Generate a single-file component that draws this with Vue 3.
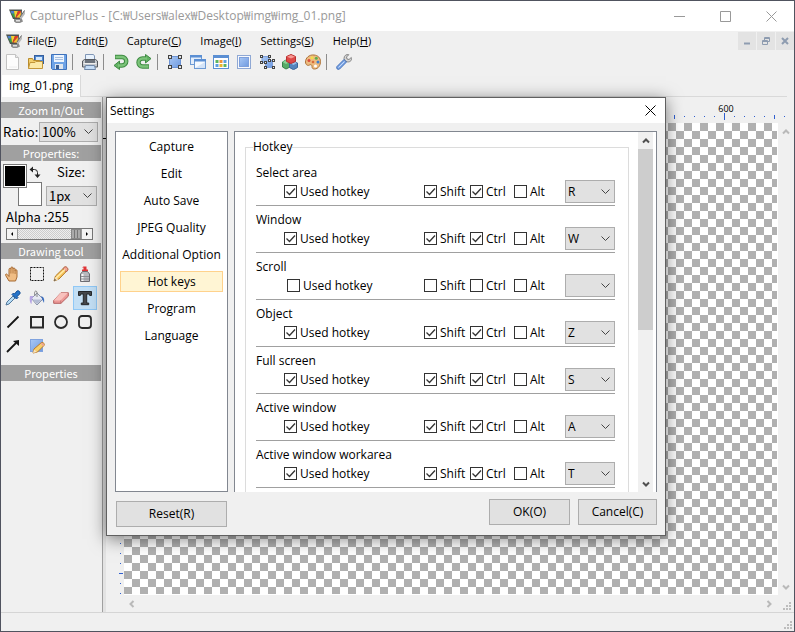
<script setup>
import { reactive, ref } from 'vue'

const menus = [
  ['File', 'F'], ['Edit', 'E'], ['Capture', 'C'], ['Image', 'I'], ['Settings', 'S'], ['Help', 'H'],
]

const toolGroups = [
  ['new', 'open', 'save'],
  ['print'],
  ['undo', 'redo'],
  ['area', 'windows', 'grid', 'full', 'nodes', 'cubes', 'palette'],
  ['wrench'],
]

const drawTools = [
  'hand', 'marquee', 'pencil', 'spray',
  'dropper', 'bucket', 'eraser', 'text',
  'line', 'rect', 'ellipse', 'round',
  'arrow', 'note',
]
const activeTool = ref('text')

const pages = ['Capture', 'Edit', 'Auto Save', 'JPEG Quality', 'Additional Option', 'Hot keys', 'Program', 'Language']
const activePage = ref('Hot keys')

const hotkeys = reactive([
  { name: 'Select area', used: true, shift: true, ctrl: true, alt: false, key: 'R' },
  { name: 'Window', used: true, shift: true, ctrl: true, alt: false, key: 'W' },
  { name: 'Scroll', used: false, shift: false, ctrl: false, alt: false, key: '' },
  { name: 'Object', used: true, shift: true, ctrl: true, alt: false, key: 'Z' },
  { name: 'Full screen', used: true, shift: true, ctrl: true, alt: false, key: 'S' },
  { name: 'Active window', used: true, shift: true, ctrl: true, alt: false, key: 'A' },
  { name: 'Active window workarea', used: true, shift: true, ctrl: true, alt: false, key: 'T' },
])
const keys = ['', 'A', 'R', 'S', 'T', 'W', 'Z']

// Ruler marks every 10 units, only as far as the editor reaches.
const marks = (size) => Array.from({ length: Math.floor(size / 10) + 1 }, (_, i) => i * 10)
const ticksX = marks(window.innerWidth - 132)
const ticksY = marks(window.innerHeight - 162)
const tickLength = (t) => (t % 100 === 0 ? 7 : t % 50 === 0 ? 4 : 1)

const node = (x, y) => `<rect x="${x}" y="${y}" width="4" height="4" fill="#444"/><rect x="${x + 1}" y="${y + 1}" width="2" height="2" fill="#e4e4e4"/>`
const dot = (x, y) => `<rect x="${x}" y="${y}" width="3" height="3" fill="#444"/><rect x="${x + 1}" y="${y + 1}" width="1" height="1" fill="#eee"/>`

const icons = {
  logo: '<path d="M0 1.500h13l-.5 9.500H4z" fill="#4c524e"/><path d="M1.500 3h3.500l1 6.500H4.500z" fill="#35a04a"/><path d="M1.500 3H5l.5 2.500H2.500z" fill="#4f7fd0"/><path d="M5 3h4L6.500 9.500H6z" fill="#f2d231"/><path d="M9 3h3l-.5 6.500h-5z" fill="#dd3a2a"/><path d="M8.500 8 12 4l-.5 5.500h-4z" fill="#f2c531"/><path d="M15.800 2 10.500 9.500l1.500 2L16 6z" fill="#b9b9b9"/><path d="M15.500 2.500 11 9" stroke="#6a6a6a" fill="none"/><path d="M5 11h8l1 2.500L11 15H7l-2-1.500z" fill="#8b8b8b"/><path d="M7 12h4v1.500H7z" fill="#e0e0e0"/>',
  new: '<path d="M1.500.5h9l3 3v12h-12z" fill="#fdfdfd" stroke="#c3c3c3"/><path d="M10.500.5v3h3" fill="#e8e8e8" stroke="#c3c3c3"/><path d="M4 13h8" stroke="#eee"/>',
  open: '<rect x="6.500" y="1.500" width="9" height="8" fill="#4e86cf" stroke="#355f9d"/><rect x="8" y="3" width="6" height="3" fill="#d5e8fb"/><path d="M.5 14.500v-10h4l1 2h6v2" fill="#f3cf6c" stroke="#b98c2d"/><path d="M.5 14.500l1.500-6h5l1-1h6.500v7z" fill="#fce9a6" stroke="#c3973a"/>',
  save: '<path d="M.5.5h15v15h-14l-1-1z" fill="#6ea3e6" stroke="#3f72bb"/><rect x="3" y="1" width="10" height="7" fill="#eef5fd"/><path d="M4 3.500h8M4 5.500h8" stroke="#a7bfe0"/><rect x="4" y="10" width="8" height="5" fill="#dfe6ee"/><rect x="5" y="11" width="3" height="4" fill="#3c5f93"/>',
  print: '<path d="M3.500.5h8l1 1.500v6h-9z" fill="#e8f2fd" stroke="#7f95b5"/><path d="M.5 7l2-1.500h11l2 1.500v6H.5z" fill="#c4c8cd" stroke="#55595f"/><path d="M3 6h10v3H3z" fill="#6d747d"/><path d="M1.500 9.500h13" stroke="#eee"/><path d="M3.500 11.500h9l1 4h-11z" fill="#c5ddf7" stroke="#6e87a8"/>',
  undo: '<path d="M2 3h7a4 4 0 0 1 0 8.500H6" fill="none" stroke="#3f8b43" stroke-width="4.400"/><path d="M6.500 7v8.500L1 11.500z" fill="#62b264" stroke="#3f8b43"/><path d="M2.500 3H9a4 4 0 0 1 0 8.500H5" fill="none" stroke="#7cc47a" stroke-width="2.400"/>',
  redo: '<path d="M10 4.500H6.500a3.800 3.800 0 0 0 0 8H13" fill="none" stroke="#3f8b43" stroke-width="4.400"/><path d="M9.500.5V9L15 4.600z" fill="#62b264" stroke="#3f8b43"/><path d="M11 4.500H6.500a3.800 3.800 0 0 0 0 8h6" fill="none" stroke="#7cc47a" stroke-width="2.400"/>',
  area: '<rect x="2.500" y="2.500" width="11" height="11" fill="url(#blue)" stroke="#6d94d6"/>' + node(1, 1) + node(11, 1) + node(1, 11) + node(11, 11),
  windows: '<rect x=".5" y="1.500" width="11" height="9" fill="#e4eefb" stroke="#6d9ad4"/><path d="M0 1h12v2.500H0z" fill="#5b8fd3"/><rect x="4.500" y="5.500" width="11" height="9" fill="#f6faff" stroke="#6d9ad4"/><path d="M4 5h12v2.500H4z" fill="#5b8fd3"/><path d="M5 14l10-6v6z" fill="#d4e4f8"/>',
  grid: '<rect x=".5" y="1.500" width="15" height="13" fill="#fff" stroke="#5b8fd3"/><path d="M0 1h16v3H0z" fill="#5b8fd3"/><path d="M2.500 6h3v3h-3zM10.500 10h3v3h-3z" fill="#5fb45f"/><path d="M6.500 6h3v3h-3z" fill="#f09038"/><path d="M10.500 6h3v3h-3zM2.500 10h3v3h-3z" fill="#5f9fe0"/><path d="M6.500 10h3v3h-3z" fill="#e9b62c"/>',
  full: '<rect x="1.500" y="1.500" width="13" height="13" fill="#f7f9fd" stroke="#8fa8d4"/><rect x="3.500" y="3.500" width="9" height="9" fill="url(#blue)" stroke="#7fa0db"/>',
  nodes: '<path d="M3 2.500h7.500v4h3v7h-7v-5H3z" fill="url(#blue)" stroke="#7d9fdc"/>' + dot(1, 1) + dot(9, 1) + dot(1, 7) + dot(5, 7) + dot(9, 5) + dot(13, 5) + dot(5, 12) + dot(13, 12),
  cubes: '<path d="M.5 8l3.500-2 4 2v5l-4 2-3.500-2z" fill="#57ab67" stroke="#39804a"/><path d="M.5 8 4 10l4-2-4-2z" fill="#8bd096"/><path d="M7.500 9l4-2 4 2v4.500l-4 2.200-4-2.200z" fill="#5584bd" stroke="#3a6599"/><path d="M8 9l3.500 2L15 9l-3.500-2z" fill="#9abfe8"/><path d="M4.500 2.500l4.500-2 4.500 2v5L9 9.500l-4.500-2z" fill="#dd4848" stroke="#b83030"/><path d="M5 2.700 9 4.600l4-1.900L9 1z" fill="#f79a94"/>',
  palette: '<path d="M9 1C4 .5.5 4 .5 8c0 3 2.500 4 4 3 1.500-.8 2.500 0 2.500 1.500C7 14.500 8 15 9.500 15c4 0 6-4 6-7.500S13 1.300 9 1z" fill="#edbb80" stroke="#ad7338"/><circle cx="4" cy="6.500" r="1.500" fill="#d94b3c"/><circle cx="7" cy="3.700" r="1.500" fill="#f4dd49"/><circle cx="11.300" cy="4.200" r="1.500" fill="#5cae4e"/><circle cx="13" cy="8" r="1.500" fill="#3c7fd0"/><circle cx="10.500" cy="12" r="1.500" fill="#fff"/><circle cx="8" cy="8" r="1.300" fill="#d86c3a"/>',
  wrench: '<path d="M15.300 3.500 13 5.500l-2-.5-.5-2L12.800.7C10.500 0 8 1.500 8 4.500L9 7l2.500.9c3 .3 4.700-2 3.800-4.400z" fill="#d4d4d4" stroke="#858585"/><path d="M8 5.500 1 12.500c-1 2 .5 3.500 2.500 2.600L10.500 8z" fill="#7ba5e6" stroke="#4470b8"/><path d="M8.500 7.500l-6 6" stroke="#c4daf8"/>',
  hand: '<path d="M4 15 .7 9.500C0 8 1.500 7.500 2.300 8.500L4 10.500V3.300c0-1.300 1.800-1.300 1.900 0V2c0-1.400 2-1.400 2.100 0v1c.1-1.200 2-1.200 2.100 0v1.500c.2-1.200 1.900-1 1.900.3V11l-1.500 4z" fill="#f0bd84" stroke="#a66a33"/><path d="M5.900 3.500v4M8 3v4.500M10.100 4v4" stroke="#a66a33" fill="none" stroke-width=".8"/>',
  marquee: '<rect x="1.500" y="1.500" width="13" height="13" fill="none" stroke="#111" stroke-dasharray="2 1"/>',
  pencil: '<path d="M1 15l1.500-5L11.500 1.200c1.500-1 4 1.300 3 3L6 13z" fill="#f7c55a" stroke="#b27928"/><path d="M10 2.600l1.700-1.500c1.500-1 3.800 1.300 3 3L13.300 6z" fill="#f2a596" stroke="#b66652"/><path d="M3 12l9-8.500" stroke="#ffebae" stroke-width="1.500"/><path d="M1 15l1.300-4L5.500 13.600z" fill="#f5dfb9"/><path d="M1 15l.7-2 1.500 1z" fill="#333"/>',
  spray: '<path d="M5 1.500 6.500.5h3v3H11v2H5v-2h1.500v-2z" fill="#e13538"/><path d="M3.500 8 5.500 5.500h5L12.500 8v7.500h-9z" fill="#b9b9be" stroke="#6d6d72"/><path d="M5.500 8v7" stroke="#f7f7f7" stroke-width="2"/><path d="M4 10.500h8M4 13h8" stroke="#8f8f94"/>',
  dropper: '<path d="M1 15l1-3 6-6 2 2-6 6z" fill="#b7dcf5" stroke="#54799c"/><path d="M7 4.500 8.500 3l1 1 2.500-3c1.500-1 4 1 2.800 3L12 6.500l1 1L11.500 9z" fill="#2574c9" stroke="#164f93"/>',
  bucket: '<path d="M2.500 8.500 8 3l6 6-6 6z" fill="#e6e9f2" stroke="#8a93a8"/><path d="M4 9.500h9L8 14z" fill="#b3bbd3"/><path d="M6 6C4.500 1 7 0 8 2v5" fill="none" stroke="#888"/><path d="M1 6h3.500L3 9.500 2.500 14C.5 13 .5 8 1 6z" fill="#b7a6e4"/><path d="M12 6c3 1 3.500 3 3 7l-1.500-3z" fill="#3d6fbf"/>',
  eraser: '<path d="M.7 10.500 8 2.700h7.300v3.500L8 13.300H.7z" fill="#ed9a98" stroke="#b4605f"/><path d="M.7 10.500H7.500l7.500-7.700-7.300-.1z" fill="#f8c1bd"/><path d="M7.700 10.500v3" stroke="#c87775"/>',
  text: '<path d="M1.500 1.500h13v4h-1.800l-.5-1.500H9.700v9h2v1.700H4.300V13h2V4H3.800l-.5 1.500H1.500z" fill="#45484c" stroke="#25282b"/>',
  line: '<path d="M2.500 13.500l11-11" stroke="#161616" stroke-width="1.800"/>',
  rect: '<rect x="2" y="3" width="12" height="10.500" fill="none" stroke="#2a2a2a" stroke-width="2"/>',
  ellipse: '<circle cx="8" cy="8" r="6" fill="none" stroke="#2a2a2a" stroke-width="1.800"/>',
  round: '<rect x="2" y="2" width="12" height="12" rx="3" fill="none" stroke="#2a2a2a" stroke-width="1.800"/>',
  arrow: '<path d="M2 14 11 5" stroke="#161616" stroke-width="1.800"/><path d="M14 2v6L8 3z" fill="#161616"/>',
  note: '<rect x="1.500" y="1.500" width="12" height="12" fill="url(#blue)" stroke="#80a3df"/><path d="M4 15l1-4 7.500-6.500c2-.5 3.500 1.500 2.500 3L8.500 14z" fill="#f8cf6b" stroke="#b97a2b"/><path d="M4 15l1-3.500L8 14z" fill="#f7e6c4"/><path d="M11.500 5.300c2-1 4 .8 3.500 2.200L14 8.300z" fill="#efa393"/>',
  swap: '<path d="M1.500 3.500h4q3 0 3 3v4" fill="none" stroke="#222"/><path d="M4 .5v6L.5 3.500zM5.500 8.500h6l-3 3.500z" fill="#222"/>',
}
</script>

<template>
  <div class="window">
    <svg class="defs" aria-hidden="true">
      <defs>
        <linearGradient id="blue" x1="0" y1="0" x2="1" y2="1">
          <stop offset="0" stop-color="#a9c8f5" /><stop offset="1" stop-color="#6f9ae0" />
        </linearGradient>
      </defs>
    </svg>

    <header class="titlebar">
      <svg class="icon" viewBox="0 0 16 16" v-html="icons.logo"></svg>
      <span class="caption">CapturePlus - [C:₩Users₩alex₩Desktop₩img₩img_01.png]</span>
      <button class="sys" aria-label="Minimize"><svg viewBox="0 0 11 11"><path d="M0 5.500h11" /></svg></button>
      <button class="sys" aria-label="Maximize"><svg viewBox="0 0 11 11"><path d="M.5.500h10v10H.5z" /></svg></button>
      <button class="sys" aria-label="Close"><svg viewBox="0 0 11 11"><path d="M.5.500l10 10M10.500.500l-10 10" /></svg></button>
    </header>

    <nav class="menubar">
      <svg class="icon" viewBox="0 0 16 16" v-html="icons.logo"></svg>
      <button v-for="[label, key] in menus" :key="label" class="menu">{{ label }}(<u>{{ key }}</u>)</button>
      <div class="mdi">
        <button aria-label="Minimize document"><svg viewBox="0 0 8 8"><path d="M1 6.500h6" stroke-width="2" /></svg></button>
        <button aria-label="Restore document"><svg viewBox="0 0 8 8"><path d="M2.500 3V.5h5v4H5.500M2.500 1.500h5M.5 3.500h5v4h-5zM.5 4.500h5" /></svg></button>
        <button aria-label="Close document"><svg viewBox="0 0 8 8"><path d="M1 1l6 6M7 1L1 7" stroke-width="2" /></svg></button>
      </div>
    </nav>

    <div class="toolbar">
      <div v-for="(group, g) in toolGroups" :key="g" class="group">
        <button v-for="name in group" :key="name" :aria-label="name">
          <svg class="icon" viewBox="0 0 16 16" v-html="icons[name]"></svg>
        </button>
      </div>
    </div>

    <div class="tabs"><button class="tab">img_01.png</button></div>

    <main class="work">
      <aside class="side">
        <h2>Zoom In/Out</h2>
        <div class="ratio">
          <label for="ratio">Ratio:</label>
          <select id="ratio"><option>100%</option></select>
        </div>
        <h2>Properties:</h2>
        <div class="props">
          <div class="swatches">
            <button class="swatch back" aria-label="Background"></button>
            <button class="swatch fore" aria-label="Foreground"></button>
            <svg class="swap" viewBox="0 0 12 12" v-html="icons.swap"></svg>
          </div>
          <div class="size">
            <label for="size">Size:</label>
            <select id="size"><option>1px</option></select>
          </div>
        </div>
        <label class="alpha" for="alpha">Alpha :255</label>
        <div class="slider">
          <svg viewBox="0 0 10 10"><path d="M6 3v4L4 5z" /></svg>
          <input id="alpha" type="range" min="0" max="255" value="255">
          <svg viewBox="0 0 10 10"><path d="M4 3v4l2-2z" /></svg>
        </div>
        <h2>Drawing tool</h2>
        <div class="tools">
          <button
            v-for="name in drawTools" :key="name" :aria-label="name"
            :class="{ active: name === activeTool }" @click="activeTool = name"
          >
            <svg class="icon" viewBox="0 0 16 16" v-html="icons[name]"></svg>
          </button>
        </div>
        <h2>Properties</h2>
      </aside>

      <section class="editor">
        <svg class="ruler-x">
          <g v-for="t in ticksX" :key="t">
            <rect :x="t + 21" :y="20 - Math.ceil(tickLength(t) / 2)" width="1" :height="tickLength(t)" fill="#2f5fd0" />
            <text v-if="t && t % 100 === 0" :x="t + 23" y="15" text-anchor="middle">{{ t }}</text>
          </g>
        </svg>
        <svg class="ruler-y">
          <rect x="0" y="15" width="4" height="1" />
          <rect
            v-for="t in ticksY" :key="t" :x="18 - Math.ceil(tickLength(t) / 2)" :y="t"
            :width="tickLength(t)" height="1" fill="#2f5fd0"
          />
        </svg>
        <div class="canvas"></div>
        <div class="scroll-y">
          <svg class="chev" viewBox="0 0 8 8"><path d="M1 5.500l3-3 3 3" /></svg>
          <svg class="chev" viewBox="0 0 8 8"><path d="M1 2.500l3 3 3-3" /></svg>
        </div>
        <div class="scroll-x">
          <svg class="chev" viewBox="0 0 8 8"><path d="M5.500 1l-3 3 3 3" /></svg>
          <svg class="chev" viewBox="0 0 8 8"><path d="M2.500 1l3 3-3 3" /></svg>
        </div>
        <svg class="grip" viewBox="0 0 8 8"><path d="M6 0h2v2H6zM3 3h2v2H3zM6 3h2v2H6zM0 6h2v2H0zM3 6h2v2H3zM6 6h2v2H6z" /></svg>
      </section>
    </main>

    <footer class="status">
      <svg class="grip" viewBox="0 0 8 8"><path d="M6 0h2v2H6zM3 3h2v2H3zM6 3h2v2H6zM0 6h2v2H0zM3 6h2v2H3zM6 6h2v2H6z" /></svg>
    </footer>

    <div class="dialog" role="dialog" aria-labelledby="dlg-title">
      <div class="dlg-bar">
        <span id="dlg-title">Settings</span>
        <button aria-label="Close"><svg viewBox="0 0 11 11"><path d="M.5.500l10 10M10.500.500l-10 10" /></svg></button>
      </div>
      <div class="dlg-body">
        <div class="pages">
          <button
            v-for="p in pages" :key="p" :class="{ active: p === activePage }" @click="activePage = p"
          >{{ p }}</button>
        </div>
        <div class="pane">
          <fieldset>
            <legend>Hotkey</legend>
            <div v-for="(h, i) in hotkeys" :key="h.name" class="hotkey">
              <div class="name">{{ h.name }}</div>
              <label class="used" :class="{ off: !h.used }"><input v-model="h.used" type="checkbox">Used hotkey</label>
              <label><input v-model="h.shift" type="checkbox">Shift</label>
              <label><input v-model="h.ctrl" type="checkbox">Ctrl</label>
              <label><input v-model="h.alt" type="checkbox">Alt</label>
              <select :id="'key' + i" v-model="h.key" :aria-label="h.name">
                <option v-for="k in keys" :key="k" :value="k">{{ k }}</option>
              </select>
            </div>
          </fieldset>
          <div class="bar">
            <svg viewBox="0 0 8 8"><path d="M1 5.500l3-3 3 3" /></svg>
            <div class="thumb"></div>
            <svg viewBox="0 0 8 8"><path d="M1 2.500l3 3 3-3" /></svg>
          </div>
        </div>
      </div>
      <div class="dlg-foot">
        <button class="reset">Reset(R)</button>
        <button class="ok">OK(O)</button>
        <button class="cancel">Cancel(C)</button>
      </div>
    </div>
  </div>
</template>

<style>
body {
  margin: 0;
}
</style>

<style scoped>
* {
  box-sizing: border-box;
}
.window {
  position: relative;
  display: flex;
  flex-direction: column;
  min-height: 100vh;
  border: 1px solid #50535f;
  background: #f0f0f0;
  color: #000;
  font: 12px/16px "Open Sans", "Noto Sans CJK KR", sans-serif;
}
.defs {
  position: absolute;
  width: 0;
  height: 0;
}
button {
  margin: 0;
  padding: 0;
  border: 0;
  background: none;
  color: inherit;
  font: inherit;
}
.icon {
  display: block;
  flex: none;
  width: 16px;
  height: 16px;
}
.titlebar {
  display: flex;
  align-items: center;
  height: 30px;
  padding-left: 8px;
  background: #fff;
  color: #999;
}
.caption {
  flex: 1;
  margin-left: 5px;
  white-space: nowrap;
}
.sys {
  display: grid;
  place-items: center;
  width: 46px;
  height: 30px;
}
.sys svg {
  width: 11px;
  height: 11px;
  fill: none;
  stroke: #999;
}
.menubar {
  display: flex;
  align-items: center;
  gap: 19px;
  height: 20px;
  padding-left: 5px;
  font-size: 11px;
}
.menubar .icon {
  margin-right: -14px;
}
.mdi {
  display: flex;
  gap: 1px;
  margin-left: auto;
}
.mdi button {
  display: grid;
  place-items: center;
  width: 18px;
  height: 18px;
  background: #e3e3e3;
}
.mdi svg {
  width: 8px;
  height: 8px;
  fill: none;
  stroke: #8e9cb0;
}
.toolbar {
  display: flex;
  height: 24px;
  padding-bottom: 2px;
}
.group {
  display: flex;
  align-items: center;
}
.group + .group::before {
  content: "";
  width: 1px;
  height: 16px;
  margin: 0 5px 0 2px;
  background: #8c8c8c;
}
.group button {
  display: grid;
  place-items: center;
  width: 23px;
  height: 22px;
}
.tabs {
  display: flex;
  height: 22px;
}
.tabs::after {
  content: "";
  flex: 1;
  margin-right: 7px;
  border-bottom: 1px solid #d9d9d9;
}
.tab {
  margin-left: 1px;
  padding: 0 7px;
  background: #fff;
  border-right: 1px solid #d9d9d9;
}
.work {
  display: flex;
  flex: 1;
  border-bottom: 1px solid #d5d5d5;
}
.side {
  flex: none;
  width: 102px;
  padding: 5px 1px 0 0;
  border-right: 1px solid #a0a0a0;
}
.side h2 {
  margin: 0;
  background: #a0a0a0;
  color: #fff;
  font: 400 11px/16px "Noto Sans CJK KR", sans-serif;
  text-align: center;
}
.side label {
  font: 13px/16px "Noto Sans CJK KR", sans-serif;
}
select {
  height: 23px;
  padding: 0 2px;
  border: 1px solid #adadad;
  border-radius: 0;
  appearance: none;
  background: #e1e1e1 url("data:image/svg+xml,%3Csvg xmlns='http://www.w3.org/2000/svg' width='9' height='6'%3E%3Cpath d='M.5.5l4 4 4-4' fill='none' stroke='%23444'/%3E%3C/svg%3E") no-repeat right 4px center;
  color: #000;
  font: inherit;
}
.side select {
  height: 20px;
  font: 13px/16px "Noto Sans CJK KR", sans-serif;
}
.ratio {
  display: flex;
  align-items: center;
  justify-content: space-between;
  height: 27px;
  padding: 0 3px 0 2px;
}
.ratio select {
  width: 59px;
}
.props {
  display: flex;
  justify-content: space-between;
  padding: 3px 4px 0 2px;
}
.swatches {
  position: relative;
  width: 39px;
  height: 42px;
}
.swatch {
  position: absolute;
  width: 24px;
  height: 24px;
  border: 1px solid #777;
}
.fore {
  top: 0;
  left: 0;
  background: #000;
  box-shadow: inset 0 0 0 1px #fff;
}
.back {
  right: 0;
  bottom: 0;
  background: #fff;
}
.swap {
  position: absolute;
  top: 2px;
  right: 1px;
  width: 12px;
  height: 12px;
}
.size {
  display: flex;
  flex-direction: column;
  justify-content: space-between;
  width: 51px;
}
.size label {
  padding-left: 11px;
}
.alpha {
  display: block;
  margin: 3px 5px;
}
.slider {
  display: flex;
  align-items: center;
  height: 12px;
  margin: 0 8px 3px 5px;
  border: 1px solid #777;
  background: #f4f4f4;
}
.slider svg {
  flex: none;
  width: 10px;
  height: 10px;
}
.slider input {
  flex: 1;
  min-width: 0;
  height: 10px;
  margin: 0;
  border: solid #999;
  border-width: 0 1px;
  appearance: none;
  background: repeating-conic-gradient(#ccc 0 25%, #eee 0 50%) 0 0 / 2px 2px;
}
.slider input::-webkit-slider-thumb {
  width: 10px;
  height: 10px;
  border: 1px solid #888;
  appearance: none;
  background: repeating-linear-gradient(90deg, #aaa 0 2px, #777 2px 3px);
}
.tools {
  display: grid;
  grid-template-columns: repeat(4, 24px);
  grid-auto-rows: 24px;
  padding: 3px 0 7px;
}
.tools button {
  display: grid;
  place-items: center;
}
.tools .active {
  background: #c3dff5;
  box-shadow: inset 0 0 0 1px #90c8f6;
}
.editor {
  display: grid;
  flex: 1;
  grid-template: 26px 1fr 17px / 21px 1fr 16px;
  min-width: 0;
  background: linear-gradient(90deg, #e3e3e3 3px, #f0f0f0 3px);
}
.ruler-x {
  grid-area: 1 / 1 / 2 / 4;
  width: 100%;
  height: 26px;
  font: 9px "Open Sans", sans-serif;
}
.ruler-y {
  grid-area: 2 / 1;
  width: 21px;
  height: 0;
  min-height: 100%;
}
.canvas {
  grid-area: 2 / 2;
  border-right: 1px solid #fff;
  border-bottom: 1px solid #fff;
  background: repeating-conic-gradient(#fff 0 25%, #b0b0b0 0 50%) 0 0 / 16px 16px;
}
.scroll-y,
.scroll-x {
  display: flex;
  justify-content: space-between;
}
.scroll-y {
  grid-area: 2 / 3;
  flex-direction: column;
  padding: 5px 4px 4px;
}
.scroll-x {
  grid-area: 3 / 2;
  padding: 5px 5px 4px 4px;
}
.chev {
  width: 8px;
  height: 8px;
  fill: none;
  stroke: #b9b9b9;
  stroke-width: 2;
}
.grip {
  width: 8px;
  height: 8px;
  fill: #bdbdbd;
}
.editor .grip {
  grid-area: 3 / 3;
  place-self: end;
  margin: 0 3px 2px 0;
}
.status {
  display: flex;
  align-items: flex-end;
  justify-content: flex-end;
  height: 18px;
  padding: 2px;
}
.dialog {
  position: absolute;
  top: 96px;
  right: 128px;
  left: 105px;
  min-width: 560px;
  border: 1px solid #606060;
  background: #f0f0f0;
  box-shadow: 0 3px 16px rgba(0, 0, 0, 0.5);
}
.dlg-bar {
  display: flex;
  align-items: center;
  justify-content: space-between;
  height: 25px;
  padding: 0 9px 0 3px;
  background: #fff;
}
.dlg-bar button {
  display: grid;
  place-items: center;
}
.dlg-bar svg {
  width: 11px;
  height: 11px;
  fill: none;
  stroke: #000;
}
.dlg-body {
  display: flex;
  gap: 6px;
  padding: 8px 8px 0;
}
.pages {
  width: 113px;
  padding: 4px;
  border: 1px solid #828790;
  background: #fff;
}
.pages button {
  display: block;
  width: 100%;
  height: 21px;
  margin-bottom: 6px;
  border: 1px solid transparent;
  white-space: nowrap;
}
.pages .active {
  border-color: #ffd28c;
  background: #fff5d4;
}
.pane {
  display: flex;
  flex: 1;
  padding: 0 3px 0 10px;
  border: 1px solid #828790;
  border-bottom: 0;
  background: #fff;
}
fieldset {
  flex: 1;
  margin: 7px 9px 0 0;
  padding: 4px 13px 4px 10px;
  border: 1px solid #dcdcdc;
  border-bottom: 0;
}
legend {
  margin-left: -3px;
  padding: 0;
}
.hotkey {
  display: grid;
  grid-template-columns: 1fr 46px 44px 51px 50px;
  align-items: center;
  padding: 6px 0 2px;
  border-bottom: 1px solid #a0a0a0;
}
.hotkey .name {
  grid-column: 1 / -1;
  height: 15px;
}
.hotkey label {
  display: flex;
  align-items: center;
  gap: 3px;
}
.hotkey .used {
  padding-left: 28px;
}
.hotkey .off {
  padding-left: 31px;
}
.hotkey input {
  flex: none;
  width: 13px;
  height: 13px;
  margin: 0;
  border: 1px solid #333;
  appearance: none;
  background: #fff;
}
.hotkey input:checked {
  background: #fff url("data:image/svg+xml,%3Csvg xmlns='http://www.w3.org/2000/svg' width='11' height='11'%3E%3Cpath d='M1.500 5.500l3 3 5.500-6' fill='none' stroke='%23333' stroke-width='1.300'/%3E%3C/svg%3E") no-repeat center;
}
.bar {
  display: flex;
  flex-direction: column;
  align-items: center;
  justify-content: space-between;
  width: 15px;
  padding: 5px 0 4px;
  background: #f0f0f0;
}
.bar svg {
  width: 8px;
  height: 8px;
  fill: none;
  stroke: #505050;
  stroke-width: 2;
}
.thumb {
  width: 15px;
  height: 181px;
  margin: 4px 0 auto;
  background: #cdcdcd;
}
.dlg-foot {
  display: flex;
  align-items: flex-start;
  gap: 8px;
  padding: 7px 8px 8px 9px;
}
.dlg-foot button {
  height: 26px;
  border: 1px solid #adadad;
  background: #e1e1e1;
}
.dlg-foot .reset {
  width: 111px;
  margin: 2px auto 0 0;
}
.ok {
  width: 81px;
}
.cancel {
  width: 79px;
}
</style>
